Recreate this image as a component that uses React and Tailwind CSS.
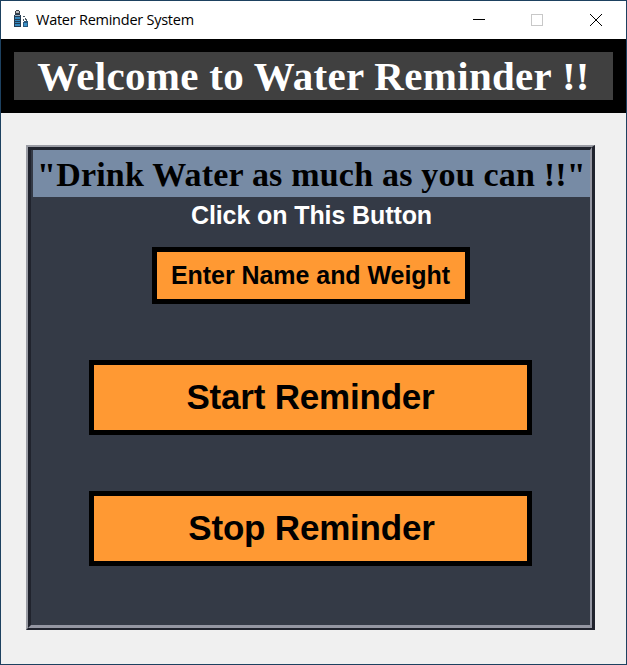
function BottleIcon() {
  return (
    <svg width="16" height="18" viewBox="0 0 16 18" className="ml-[12px] mt-[9px] shrink-0" shapeRendering="crispEdges">
      <path d="M3 0h3v1h1v3H2V1h1z" fill="#3b3f46" />
      <path d="M3 1h3v2H3z" fill="#b9bcc0" />
      <path d="M2 4h5v1h1v12H1V5h1z" fill="#243b52" />
      <path d="M2 5h5v1H2z" fill="#9fb0bd" />
      <path d="M2 7h5v2H2zM2 10h5v1H2zM2 12h5v1H2zM2 14h5v2H2z" fill="#3387bd" />
      <path d="M11 11h4v6h-5v-5h1z" fill="#2a577b" />
      <path d="M11 13h3v3h-3z" fill="#3c93ca" />
      <path d="M10 6h2v1h-2zM12 8h1v2h-1zM13 9h1v2h-1zM10 9h1v2h-1z" fill="#4b5964" />
    </svg>
  );
}

function TitleBar() {
  return (
    <header className="flex h-[38px] shrink-0 bg-white">
      <BottleIcon />
      <h1 className="ml-[7px] whitespace-nowrap font-['Open_Sans',sans-serif] text-[14.5px] leading-[37px] tracking-[-0.25px] text-black">
        Water Reminder System
      </h1>
      <svg width="160" height="38" viewBox="0 0 160 38" className="ml-auto shrink-0" fill="none">
        <path d="M7 18.5h12" stroke="#000" />
        <rect x="65.500" y="13.500" width="11" height="11" stroke="#c8c8c8" />
        <path d="M124 13l12 12M136 13l-12 12" stroke="#000" />
      </svg>
    </header>
  );
}

export default function App() {
  return (
    <main className="flex h-[665px] w-[627px] flex-col overflow-hidden border border-[#1d4160] bg-[#f0f0f0]">
      <TitleBar />
      <div className="h-[74px] shrink-0 border-x-[13px] border-y-[13px] border-black bg-[#404040]">
        <h2 className="whitespace-nowrap text-center font-['Liberation_Serif',serif] text-[41px] font-bold leading-[49px] tracking-[0.3px] text-white">
          Welcome to Water Reminder !!
        </h2>
      </div>
      <section className="ml-[25px] mt-[32px] h-[485px] w-[569px] shrink-0 border-2 border-r-[3px] border-b-[#20232d] border-l-[#9a9ca4] border-r-[#20232d] border-t-[#9a9ca4]">
        <div className="flex h-full flex-col items-center border-[3px] border-r-2 border-b-[#9496a2] border-l-[#20232d] border-r-[#9496a2] border-t-[#20232d] bg-[#343a46]">
          <h3 className="ml-[2px] h-[47px] w-[557px] shrink-0 whitespace-nowrap bg-[#778ba5] text-center font-['Liberation_Serif',serif] text-[34px] font-bold leading-[50px] tracking-[0.2px] text-black">
            &quot;Drink Water as much as you can !!&quot;
          </h3>
          <p className="mt-[2px] h-[32px] whitespace-nowrap pl-[2px] font-['Liberation_Sans',sans-serif] text-[25px] font-bold leading-[32px] tracking-[-0.1px] text-white">
            Click on This Button
          </p>
          <button className="mt-[16px] h-[57px] w-[318px] shrink-0 whitespace-nowrap border-[5px] border-black bg-[#ff9933] font-['Liberation_Sans',sans-serif] text-[25px] font-bold tracking-[-0.05px] text-black">
            Enter Name and Weight
          </button>
          <button className="mt-[56px] h-[75px] w-[443px] shrink-0 whitespace-nowrap border-[5px] border-black bg-[#ff9933] font-['Liberation_Sans',sans-serif] text-[35px] font-bold tracking-[-0.2px] text-black">
            Start Reminder
          </button>
          <button className="mt-[56px] h-[75px] w-[443px] shrink-0 whitespace-nowrap border-[5px] border-black bg-[#ff9933] pl-[2px] font-['Liberation_Sans',sans-serif] text-[35px] font-bold tracking-[-0.2px] text-black">
            Stop Reminder
          </button>
        </div>
      </section>
    </main>
  );
}
